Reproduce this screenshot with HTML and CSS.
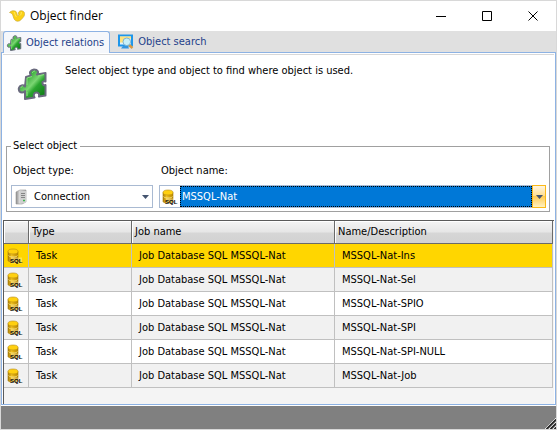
FILE: index.html
```html
<!DOCTYPE html>
<html lang="en">
<head>
<meta charset="utf-8">
<title>Object finder</title>
<link rel="stylesheet" href="styles.css">
</head>
<body>
<svg class="defs" aria-hidden="true">
  <defs>
    <linearGradient id="green" x1="0" y1="0" x2="1" y2="1">
      <stop offset="0" stop-color="#14861c"/><stop offset=".3" stop-color="#3fae40"/><stop offset=".5" stop-color="#7bd672"/><stop offset=".62" stop-color="#2ba52f"/><stop offset="1" stop-color="#067010"/>
    </linearGradient>
    <linearGradient id="gold" x1="0" y1="0" x2="1" y2="0">
      <stop offset="0" stop-color="#a87c08"/><stop offset=".35" stop-color="#f0c020"/><stop offset="1" stop-color="#b88600"/>
    </linearGradient>
    <linearGradient id="metal" x1="0" y1="0" x2="1" y2="0">
      <stop offset="0" stop-color="#8c8c8c"/><stop offset=".4" stop-color="#e4e4e4"/><stop offset="1" stop-color="#a8a8a8"/>
    </linearGradient>
    <symbol id="puzzle" viewBox="0 0 30 32">
      <path d="M9 9l5-1.500c-2-2.500-1-5.500 3-6 4 0 5 3 3 5L28.500 5v8.500c-2-.5-3.500 0-3 2 .3 1.500 1.500 2 3 1.500v10.500l-6.500 1c.5-2.500-.5-4-2.500-4-2.500 0-3.500 2.500-2 5L8 31v-8c-1.500 2-4 2-5.500.5C1 21 2 18 4.500 17.500c1.500-.5 2.500 0 3.500 1z" fill="url(#green)" stroke="#6a6a7e" stroke-width="2" stroke-linejoin="round"/>
      <path d="M10 17v-7l5-1.500M21 8l6-1.500M15.500 5c0-1.500 1-2 2.500-2M10 24v4M4 20c0-1 1-2 2-2" stroke="#8be080" fill="none"/>
    </symbol>
    <symbol id="sql" viewBox="0 0 16 16">
      <path d="M1 3.500v9c0 2 10 2 10 0v-9z" fill="url(#gold)" stroke="#a87c08" stroke-width=".6"/>
      <ellipse cx="6" cy="3.500" rx="5" ry="2.500" fill="#ffd010" stroke="#b58a10" stroke-width=".6"/>
      <path d="M1.500 7.500c1 2 8 2 9 0" fill="none" stroke="#fff0a0" stroke-width=".7"/>
      <path d="M4 9.500h11v6H4z" fill="#fff" opacity=".3"/>
      <text x="3" y="15" class="sql-text">SQL</text>
    </symbol>
  </defs>
</svg>
<div class="window">
  <header class="titlebar">
    <svg class="logo" viewBox="0 0 16 12" aria-hidden="true">
      <path d="M.5 2.500C2 .5 5.500.2 7 1.500c1.200 1.200 1 3.500 1.800 4.200.9 0 1.200-.8.700-1.700C9 2.500 10.200.7 12 .7c3.800.2 4.500 3.300 2.800 5.800-1.800 2.500-3.600 4.800-6.300 4.800C6 11.200 4.800 9 4.200 6.500 3.700 4.200 2.700 2.800.5 2.500z" fill="#fbd015" stroke="#c4a434" stroke-width=".6"/>
      <path d="M5 2c1 1 1 4 2.500 5M11 5.500c1-.8 1.500-2 1.300-3.500" fill="none" stroke="#fff080" stroke-width=".7"/>
    </svg>
    <h1 class="title">Object finder</h1>
    <div class="controls">
      <button type="button" aria-label="Minimize"><svg viewBox="0 0 11 11"><path d="M0 5.500h10"/></svg></button>
      <button type="button" aria-label="Maximize"><svg viewBox="0 0 11 11"><path d="M.5.5h9v9h-9z"/></svg></button>
      <button type="button" aria-label="Close"><svg viewBox="0 0 11 11"><path d="M.5.5l9 9M9.500.5l-9 9"/></svg></button>
    </div>
  </header>
  <nav class="tabs" role="tablist">
    <button type="button" class="tab tab-active" role="tab" aria-selected="true"><svg class="tab-icon" aria-hidden="true"><use href="#puzzle"/></svg>Object relations</button>
    <button type="button" class="tab" role="tab" aria-selected="false">
      <svg class="tab-icon" viewBox="0 0 16 16" aria-hidden="true">
        <path d="M1 1.500h13v10H1z" fill="#dff3fc" stroke="#1e96ea" stroke-width="2"/>
        <path d="M2 2.500h11v2H6v4H2z" fill="#ffe27a"/>
        <path d="M5 12h5l1 2.500H3z" fill="#3295df"/>
        <path d="M11 11l3.500 3" stroke="#d99a42" stroke-width="2.500"/>
        <circle cx="8.800" cy="7.800" r="3.800" fill="#c8f0f8" stroke="#7fb4d0"/>
      </svg>Object search</button>
  </nav>
  <main class="panel">
    <section class="intro">
      <svg class="intro-icon" aria-hidden="true"><use href="#puzzle"/></svg>
      <p>Select object type and object to find where object is used.</p>
    </section>
    <fieldset class="group">
      <legend>Select object</legend>
      <div class="fields">
        <div class="field">
          <label for="type">Object type:</label>
          <div class="combo">
            <svg class="combo-icon" viewBox="0 0 16 16" aria-hidden="true">
              <path d="M2 3l4-2h6v12l-4 2H2z" fill="url(#metal)" stroke="#969696" stroke-width=".6"/>
              <path d="M6 2h6v12H6z" fill="#d0d0d0"/>
              <path d="M7 4.500h4M7 6.500h4M7 8.500h4" stroke="#858585"/>
              <path d="M9 11.500h2" stroke="#39b54a" stroke-width="1.500"/>
            </svg>
            <select id="type"><option>Connection</option></select>
            <span class="arrow"><svg viewBox="0 0 7 4"><path d="M0 0h7L3.500 4z"/></svg></span>
          </div>
        </div>
        <div class="field">
          <label for="name">Object name:</label>
          <div class="combo combo-focus">
            <svg class="combo-icon" aria-hidden="true"><use href="#sql"/></svg>
            <select id="name"><option>MSSQL-Nat</option></select>
            <span class="arrow"><svg viewBox="0 0 7 4"><path d="M0 0h7L3.500 4z"/></svg></span>
          </div>
        </div>
      </div>
    </fieldset>
    <div class="grid">
      <table>
        <colgroup><col class="col-icon"><col class="col-type"><col class="col-job"><col></colgroup>
        <thead><tr><th></th><th>Type</th><th>Job name</th><th>Name/Description</th></tr></thead>
        <tbody>
          <tr class="selected"><td><svg class="row-icon"><use href="#sql"/></svg></td><td>Task</td><td>Job Database SQL MSSQL-Nat</td><td>MSSQL-Nat-Ins</td></tr>
          <tr><td><svg class="row-icon"><use href="#sql"/></svg></td><td>Task</td><td>Job Database SQL MSSQL-Nat</td><td>MSSQL-Nat-Sel</td></tr>
          <tr><td><svg class="row-icon"><use href="#sql"/></svg></td><td>Task</td><td>Job Database SQL MSSQL-Nat</td><td>MSSQL-Nat-SPIO</td></tr>
          <tr><td><svg class="row-icon"><use href="#sql"/></svg></td><td>Task</td><td>Job Database SQL MSSQL-Nat</td><td>MSSQL-Nat-SPI</td></tr>
          <tr><td><svg class="row-icon"><use href="#sql"/></svg></td><td>Task</td><td>Job Database SQL MSSQL-Nat</td><td>MSSQL-Nat-SPI-NULL</td></tr>
          <tr><td><svg class="row-icon"><use href="#sql"/></svg></td><td>Task</td><td>Job Database SQL MSSQL-Nat</td><td>MSSQL-Nat-Job</td></tr>
        </tbody>
      </table>
    </div>
  </main>
  <footer class="status">
    <svg class="grip" viewBox="0 0 11 11" aria-hidden="true">
      <path d="M0 11L11 0M4 11l7-7M8 11l3-3" stroke="#e8e8e8"/>
      <path d="M1.500 11L11 1.500M5.500 11L11 5.500M9.500 11L11 9.500" stroke="#222" stroke-width="1.500"/>
    </svg>
  </footer>
</div>
</body>
</html>
```

FILE: styles.css
```css
* { box-sizing: border-box; }
body {
  margin: 0;
  font-family: "DejaVu Sans Condensed", "Noto Sans", sans-serif;
  font-size: 11px;
  line-height: 14px;
  color: #000;
}
button, select { font: inherit; color: inherit; }
button { background: none; border: 0; padding: 0; }
svg { display: block; flex: none; }
.defs { position: absolute; width: 0; height: 0; }

.window {
  min-height: 100vh;
  display: flex;
  flex-direction: column;
  border: 1px solid #d8d8d8;
  background: #fff;
}

.titlebar { display: flex; align-items: center; height: 30px; padding-left: 8px; }
.logo { width: 16px; height: 12px; }
.title { margin: 0 0 0 5px; font: 12px/16px "Open Sans", sans-serif; }
.controls { display: flex; margin-left: auto; }
.controls button { width: 46px; height: 28px; display: grid; place-items: center; }
.controls svg { width: 11px; height: 11px; fill: none; stroke: #000; }

.tabs { display: flex; height: 21px; background: #e0e0e0; padding-left: 2px; }
.tab { display: flex; align-items: center; gap: 4px; height: 22px; padding: 0 8px; color: #1e3f8a; }
.tab-active {
  padding: 0 5px 0 2px;
  background: #f5f7fb;
  border: 1px solid #8db2e3;
  border-bottom: 0;
  border-radius: 3px 3px 0 0;
  z-index: 1;
}
.tab-icon { width: 16px; height: 16px; }

.panel {
  flex: 1;
  display: flex;
  flex-direction: column;
  border: 1px solid #8db2e3;
  padding: 1px 1px 0;
}
.intro {
  display: flex;
  align-items: flex-start;
  gap: 18px;
  height: 85px;
  padding: 13px 14px 0;
  border-top: 1px solid #d8d8d8;
}
.intro-icon { width: 30px; height: 32px; }
.intro p { margin: -4px 0 0; }

.group { margin: 0 4px 0 3px; padding: 11px 3px 3px 4px; border: 1px solid #a0a0a0; min-width: 0; }
.group legend { padding: 0 3px 0 2px; }
.fields { display: flex; gap: 6px; }
.field { display: flex; flex-direction: column; gap: 7px; flex: 1; }
.field:first-child { flex: 0 0 142px; }
.field label { padding-left: 2px; }
.combo { display: flex; align-items: center; height: 23px; border: 1px solid #a9bad2; }
.combo-icon { width: 16px; height: 16px; margin: 0 2px; }
.combo select {
  flex: 1;
  min-width: 0;
  height: 21px;
  appearance: none;
  border: 0;
  padding: 0 2px;
  background: #fff;
  outline: 0;
}
.combo-focus select { background: #0078d7; color: #fff; border: 1px dotted #000; padding: 0 1px; }
.arrow { display: grid; place-items: center; width: 13px; height: 23px; pointer-events: none; }
.arrow svg { width: 7px; height: 4px; fill: #44546f; }
.combo-focus { border-right: 0; }
.combo-focus .arrow { width: 14px; border: 1px solid #fbb917; background: linear-gradient(#fff5df, #ffdf93 45%, #ffcb55 50%, #fff1c0); }

.grid {
  flex: 1;
  margin-top: 8px;
  background: #f4f4f4;
  border-top: 1px solid #5a5a5a;
  border-left: 1px solid #5a5a5a;
  padding-right: 1px;
}
table { width: 100%; table-layout: fixed; border-collapse: separate; border-spacing: 0; }
.col-icon { width: 25px; }
.col-type { width: 103px; }
.col-job { width: 203px; }
th {
  height: 23px;
  padding: 0 3px;
  text-align: left;
  font-weight: normal;
  background: linear-gradient(#f4f4f4, #e6e6e6 50%, #d6d6d6 55%, #d2d2d2);
  border-right: 1px solid #6a6a6a;
  border-bottom: 1px solid #6a6a6a;
  box-shadow: inset 1px 1px #fff;
}
td {
  height: 24px;
  padding: 0 7px;
  background: #fff;
  border-right: 1px solid #c0c0c0;
  border-bottom: 1px solid #c0c0c0;
}
td:first-child { padding: 0 3px; }
tr:nth-child(even) td { background: #f1f1f1; }
.selected td { background: #ffd600; }
.row-icon { width: 16px; height: 16px; }
.sql-text { font: bold 6px "Liberation Sans", sans-serif; fill: #000; }

.status {
  display: flex;
  justify-content: flex-end;
  align-items: flex-end;
  height: 23px;
  margin-top: 1px;
  background: #808080;
}
.grip { width: 11px; height: 11px; }
```
